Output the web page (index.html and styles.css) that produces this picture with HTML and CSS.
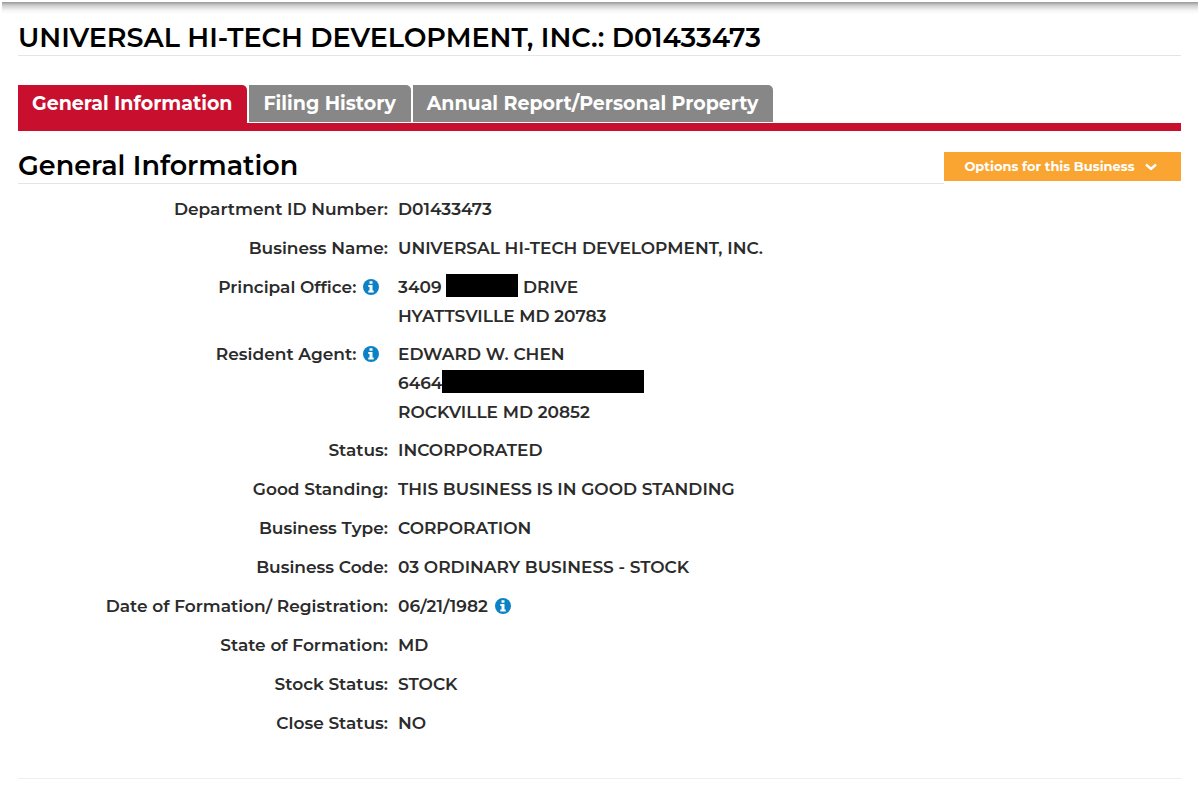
FILE: index.html
```html
<!DOCTYPE html>
<html lang="en">
<head>
  <meta charset="UTF-8">
  <title>UNIVERSAL HI-TECH DEVELOPMENT, INC.: D01433473</title>
  <meta name="viewport" content="width=device-width,initial-scale=1">
  <link rel="stylesheet" href="styles.css">
</head>
<body>
  <!-- shared info icon -->
  <svg class="sprite" aria-hidden="true">
    <symbol id="info" viewBox="0 0 16 16">
      <circle cx="8" cy="8" r="8" fill="#0b82c5"/>
      <path d="M6.5 2.3h3v2.5h-3zM5.3 6h4.2v5.4h1.2v2H5.3v-2h1.2V8H5.3z" fill="#fff"/>
    </symbol>
  </svg>

  <div class="top-shadow"></div>
  <main class="page">
    <h1>UNIVERSAL HI-TECH DEVELOPMENT, INC.: D01433473</h1>

    <nav class="tabs">
      <a class="tab active" href="#general">General Information</a>
      <a class="tab" href="#filing">Filing History</a>
      <a class="tab" href="#annual">Annual Report/Personal Property</a>
    </nav>

    <section id="general">
      <div class="section-head">
        <h2>General Information</h2>
        <button type="button" class="options">
          Options for this Business
          <svg class="chevron" viewBox="0 0 12 8" aria-hidden="true"><path d="M1 1.5l5 4.5 5-4.5" fill="none" stroke="#fff" stroke-width="2.4"/></svg>
        </button>
      </div>

      <dl class="details">
        <div class="row"><dt>Department ID Number:</dt><dd>D01433473</dd></div>
        <div class="row"><dt>Business Name:</dt><dd>UNIVERSAL HI-TECH DEVELOPMENT, INC.</dd></div>
        <div class="row address">
          <dt>Principal Office: <svg class="info"><use href="#info"/></svg></dt>
          <dd>3409 <span class="redacted short"></span> DRIVE<br>HYATTSVILLE MD 20783</dd>
        </div>
        <div class="row address">
          <dt>Resident Agent: <svg class="info"><use href="#info"/></svg></dt>
          <dd>EDWARD W. CHEN<br>6464<span class="redacted long"></span><br>ROCKVILLE MD 20852</dd>
        </div>
        <div class="row"><dt>Status:</dt><dd>INCORPORATED</dd></div>
        <div class="row"><dt>Good Standing:</dt><dd>THIS BUSINESS IS IN GOOD STANDING</dd></div>
        <div class="row"><dt>Business Type:</dt><dd>CORPORATION</dd></div>
        <div class="row"><dt>Business Code:</dt><dd>03 ORDINARY BUSINESS - STOCK</dd></div>
        <div class="row"><dt>Date of Formation/ Registration:</dt><dd>06/21/1982 <svg class="info"><use href="#info"/></svg></dd></div>
        <div class="row"><dt>State of Formation:</dt><dd>MD</dd></div>
        <div class="row"><dt>Stock Status:</dt><dd>STOCK</dd></div>
        <div class="row"><dt>Close Status:</dt><dd>NO</dd></div>
      </dl>
    </section>
  </main>
</body>
</html>
```
FILE: styles.css
```css
*{box-sizing:border-box}
body{margin:0;padding:2px 2px 0;background:#fff;color:#2b2b2b;
  font-family:Montserrat,Inter,sans-serif;font-size:17px;line-height:29px;font-weight:600}
.sprite{position:absolute;width:0;height:0}
.top-shadow{height:12px;background:linear-gradient(#999,#d0d0d0 30%,#f4f4f4 70%,#fff)}
.page{padding:6px 17px 0 16px}

h1,h2{margin:0;color:#000;font-size:27px;line-height:35px;font-weight:600;
  border-bottom:1px solid #e5e5e5}

/* tabs */
.tabs{display:flex;gap:2px;margin-top:29px;border-bottom:8px solid #c8102e}
.tab{padding:4px 15px 4px 14px;height:37px;margin-bottom:1px;background:#878787;color:#fff;
  font-size:19px;line-height:30px;font-weight:700;text-decoration:none;border-radius:0 5px 0 0}
.tab.active{height:38px;margin-bottom:0;background:#c8102e}

/* section title and options button */
.section-head{display:flex;align-items:flex-start;margin-top:17px}
.section-head h2{flex:1}
.options{display:flex;align-items:center;justify-content:center;gap:10px;
  width:237px;height:29px;margin-top:4px;padding:0 4px 0 0;border:none;background:#faa531;
  color:#fff;font:700 13px/29px Montserrat,Inter,sans-serif;cursor:pointer}
.chevron{width:12px;height:8px}

/* details list */
.details{margin:11px 0 0;padding-bottom:30px;border-bottom:1px solid #eee}
.row{display:grid;grid-template-columns:370px 1fr;column-gap:10px;margin-bottom:10px}
.row.address{margin-bottom:9px}
dt{text-align:right}
dd{margin:0}
.info{width:16px;height:16px;margin-left:2px;vertical-align:-2px}
dt .info{margin-right:9px}
.redacted{display:inline-block;height:23px;background:#000;vertical-align:-4px}
.short{width:72px}
.long{width:202px}

@media(max-width:700px){
  .tabs{flex-wrap:wrap}
  .row{grid-template-columns:1fr}
  dt{text-align:left}
}
```
